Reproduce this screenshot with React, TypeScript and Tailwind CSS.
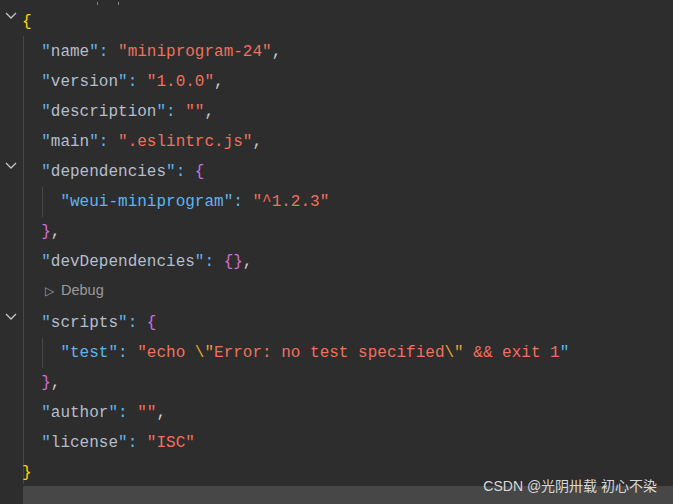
import React from "react";

type Tok = { t: string; c: string };

const K = "text-[#b4bdcc]"; // top-level key text
const KN = "text-[#5cb6ee]"; // nested key
const Q = "text-[#5cb6ee]"; // key quotes
const S = "text-[#f0705e]"; // strings
const P = "text-[#cccccc]"; // punctuation
const B1 = "text-[#ffd700]";
const B2 = "text-[#d26cd6]";

const key = (name: string, nested = false): Tok[] => [
  { t: '"', c: Q },
  { t: name, c: nested ? KN : K },
  { t: '"', c: Q },
  { t: ": ", c: Q },
];

const str = (v: string): Tok[] => [{ t: `"${v}"`, c: S }];

function Chevron() {
  return (
    <svg width="14" height="10" viewBox="0 0 14 10" className="text-[#c5c5c5]">
      <polyline points="2,2 7,7 12,2" fill="none" stroke="currentColor" strokeWidth="1.3" />
    </svg>
  );
}

function Line({ toks, fold, indent = 0 }: { toks: Tok[]; fold?: boolean; indent?: number }) {
  return (
    <div className="flex h-[30px] items-center">
      <div className="w-[22px] shrink-0 flex justify-center -mt-[8px]">{fold && <Chevron />}</div>
      <div className="whitespace-pre translate-y-[2px]">
        {" ".repeat(indent)}
        {toks.map((k, i) => (
          <span key={i} className={k.c}>
            {k.t}
          </span>
        ))}
      </div>
    </div>
  );
}

export default function App() {
  return (
    <div className="relative w-[673px] h-[504px] overflow-hidden bg-[#2d2d2d] font-['Liberation_Mono',monospace] text-[16px]">
      {/* cut-off line above the viewport */}
      <div className="h-[5px] flex items-end gap-[20px] pl-[97px]">
        <div className="w-px h-[3px] bg-[#5a9e4a]" />
        <div className="w-px h-[3px] bg-[#8a8a8a]" />
      </div>
      <div className="relative">
        {/* indent guides */}
        <div className="absolute left-[23px] top-[31px] h-[448px] w-px bg-[#474747]" />
        <div className="absolute left-[42px] top-[182px] h-[30px] w-px bg-[#474747]" />
        <div className="absolute left-[42px] top-[333px] h-[30px] w-px bg-[#474747]" />

        <Line fold toks={[{ t: "{", c: B1 }]} />
        <Line indent={2} toks={[...key("name"), ...str("miniprogram-24"), { t: ",", c: P }]} />
        <Line indent={2} toks={[...key("version"), ...str("1.0.0"), { t: ",", c: P }]} />
        <Line indent={2} toks={[...key("description"), ...str(""), { t: ",", c: P }]} />
        <Line indent={2} toks={[...key("main"), ...str(".eslintrc.js"), { t: ",", c: P }]} />
        <Line fold indent={2} toks={[...key("dependencies"), { t: "{", c: B2 }]} />
        <Line indent={4} toks={[...key("weui-miniprogram", true), ...str("^1.2.3")]} />
        <Line indent={2} toks={[{ t: "}", c: B2 }, { t: ",", c: P }]} />
        <Line indent={2} toks={[...key("devDependencies"), { t: "{}", c: B2 }, { t: ",", c: P }]} />
        <div className="flex h-[31px] items-center pl-[45px] text-[14.5px] text-[#9a9a9a] font-['Liberation_Sans',sans-serif]">
          <span className="text-[12px] mr-[7px]">▷</span>
          <span>Debug</span>
        </div>
        <Line fold indent={2} toks={[...key("scripts"), { t: "{", c: B2 }]} />
        <Line
          indent={4}
          toks={[
            ...key("test", true),
            { t: '"echo ', c: S },
            { t: '\\"', c: "text-[#e6a23c]" },
            { t: "Error: no test specified", c: S },
            { t: '\\"', c: "text-[#e6a23c]" },
            { t: " && exit 1", c: S },
            { t: '"', c: Q },
          ]}
        />
        <Line indent={2} toks={[{ t: "}", c: B2 }, { t: ",", c: P }]} />
        <Line indent={2} toks={[...key("author"), ...str(""), { t: ",", c: P }]} />
        <Line indent={2} toks={[...key("license"), ...str("ISC")]} />
        <Line toks={[{ t: "}", c: B1 }]} />
      </div>
      {/* horizontal scrollbar */}
      <div className="ml-[23px] h-[18px] bg-[#474747]" />
      <div className="absolute right-[16px] bottom-[7px] text-[14px] text-[#d8d8d8] font-['Liberation_Sans','Noto_Sans_CJK_SC',sans-serif]">
        CSDN @光阴卅载 初心不染
      </div>
    </div>
  );
}
